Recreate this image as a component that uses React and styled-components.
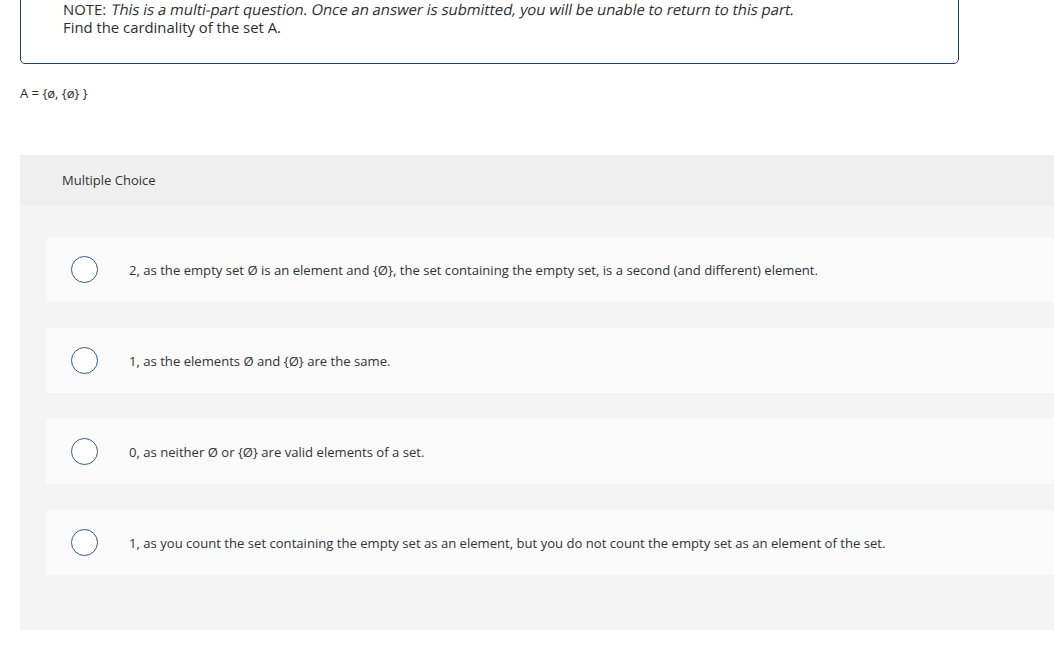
import React from 'react';
import styled, { createGlobalStyle } from 'styled-components';

const GlobalStyle = createGlobalStyle`
  html, body {
    margin: 0;
    padding: 0;
    background: #fff;
  }
  body {
    font-family: "Open Sans", Arial, sans-serif;
    color: #333;
    overflow: hidden;
  }
`;

const Page = styled.div`
  width: 1054px;
  height: 650px;
  overflow: hidden;
`;

const NoteBox = styled.div`
  margin: -20px 0 0 20px;
  width: 939px;
  box-sizing: border-box;
  height: 84px;
  border: 1px solid #1f3e69;
  border-radius: 5px;
  padding: 19px 42px 0;
  font-size: 14.85px;
  color: #2d2d2d;
`;

const NoteLine = styled.div`
  line-height: 18px;
  white-space: nowrap;
`;

// the reference italic is a slanted regular face, so skew the upright one
const Slanted = styled.em`
  display: inline-block;
  font-style: normal;
  transform: skewX(-11deg);
  transform-origin: left bottom;
`;

const SetLine = styled.p`
  margin: 21px 0 0 20px;
  font-size: 13px;
  line-height: 16px;
  color: #2d2d2d;
`;

const ChoicePanel = styled.section`
  margin: 54px 0 0 20px;
  width: 1040px;
`;

const PanelHeader = styled.div`
  height: 50px;
  background: #efefef;
  display: flex;
  align-items: center;
  padding-left: 42px;
  font-size: 13px;
  color: #333;
`;

const PanelBody = styled.div`
  background: #f4f4f4;
  padding: 32px 0 55px 26px;
  display: flex;
  flex-direction: column;
  gap: 26px;
`;

const Option = styled.label`
  height: 65px;
  background: #fafafa;
  border-radius: 3px;
  display: flex;
  align-items: center;
  font-size: 13.1px;
  color: #333;
`;

const Radio = styled.span`
  width: 25px;
  height: 25px;
  border: 1.5px solid #2f5b87;
  border-radius: 50%;
  margin-left: 25px;
  margin-right: 31px;
  flex-shrink: 0;
  background: #fff;
`;

const choices = [
  '2, as the empty set Ø is an element and {Ø}, the set containing the empty set, is a second (and different) element.',
  '1, as the elements Ø and {Ø} are the same.',
  '0, as neither Ø or {Ø} are valid elements of a set.',
  '1, as you count the set containing the empty set as an element, but you do not count the empty set as an element of the set.',
];

const App = () => (
  <Page>
    <GlobalStyle />
    <NoteBox>
      <NoteLine>
        NOTE: <Slanted>This is a multi-part question. Once an answer is submitted, you will be unable to return to this part.</Slanted>
      </NoteLine>
      <NoteLine>Find the cardinality of the set A.</NoteLine>
    </NoteBox>
    <SetLine>A = {'{'}ø, {'{'}ø{'}'} {'}'}</SetLine>
    <ChoicePanel>
      <PanelHeader>Multiple Choice</PanelHeader>
      <PanelBody>
        {choices.map(text => (
          <Option key={text}>
            <Radio />
            {text}
          </Option>
        ))}
      </PanelBody>
    </ChoicePanel>
  </Page>
);

export default App;
